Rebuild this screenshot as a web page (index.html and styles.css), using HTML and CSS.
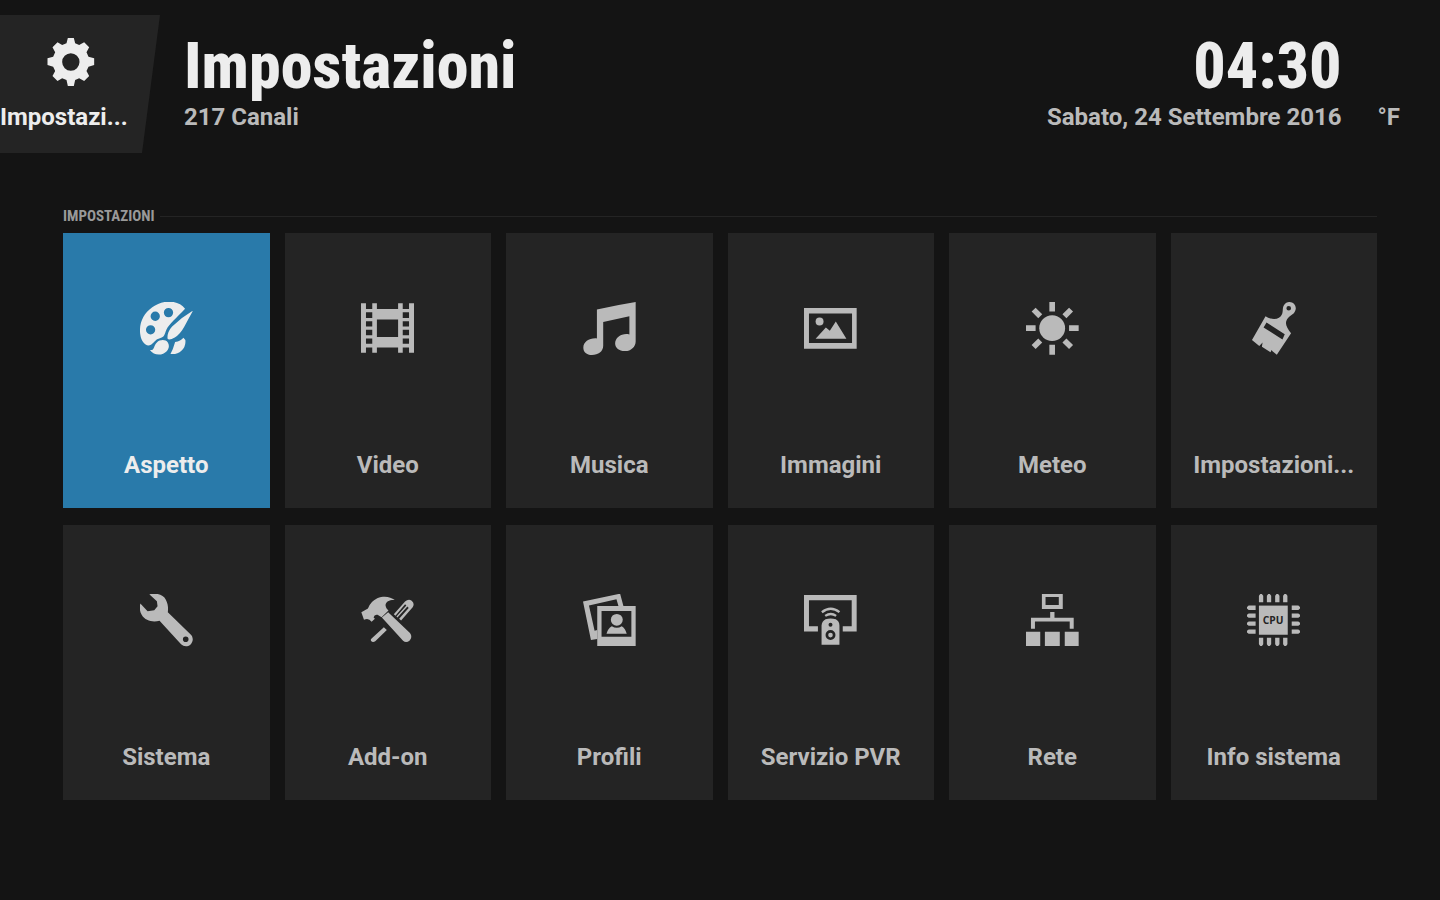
FILE: index.html
```html
<!DOCTYPE html>
<html lang="it">
<head>
    <meta charset="UTF-8">
    <meta name="viewport" content="width=device-width, initial-scale=1.0">
    <title>Impostazioni</title>
    <link rel="stylesheet" href="styles.css">
</head>
<body>
    <header class="testata">
        <a class="scheda" href="#">
            <svg class="ingranaggio" viewBox="136 114 141 144" aria-hidden="true">
                <path fill-rule="evenodd" d="M197 114h18l4 16 12 5 15-8 15 15-8 15 6 13 17 5v20l-17 5-6 13 8 15-15 15-15-8-12 5-4 18h-18l-4-18-13-5-14 8-15-15 8-15-6-13-17-5v-20l17-5 6-13-8-15 15-15 14 8 13-5zM206 160a26 26 0 1 0 0 52 26 26 0 1 0 0-52z"/>
            </svg>
            <span>Impostazi...</span>
        </a>
        <div class="titolo">
            <h1>Impostazioni</h1>
            <p>217 Canali</p>
        </div>
        <div class="orologio">
            <time class="ora">04:30</time>
            <p>Sabato, 24 Settembre 2016</p>
        </div>
        <p class="gradi">°F</p>
    </header>

    <main class="contenuto">
        <h2 class="sezione">IMPOSTAZIONI</h2>
        <nav class="griglia">
            <a class="voce attiva" href="#">
                <svg viewBox="42 36 160 160" aria-hidden="true">
                    <path fill-rule="evenodd" d="M178 56C158 29 110 28 79 52 50 72 38 105 43 135c3 22 18 38 32 30 10-6 13-16 25-19 18-4 16-14 22-27 7-16 29-34 56-63zM128 54a14 14 0 1 1 0 28 14 14 0 1 1 0-28zM88 65a14 14 0 1 1 0 28 14 14 0 1 1 0-28zM74 106a14 14 0 1 1 0 28 14 14 0 1 1 0-28z"/>
                    <path d="M200 63q-34 20-61 47-15 16-14 36 4 8 22-3 16-9 29-33 14-26 25-46zM72 181c15 2 10-13 21-23 9-9 26-10 33 0 8 13 0 28-14 34-14 6-31 2-40-11zM173 144q-8 10-25 13-6 22-14 36 21 2 33-10 14-13 12-32z"/>
                </svg>
                <span>Aspetto</span>
            </a>
            <a class="voce" href="#">
                <svg viewBox="42 36 160 160" aria-hidden="true">
                    <path fill-rule="evenodd" d="M42 40h15v17h19V40h14v17h64V40h14v17h19V40h15v149h-15v-16h-19v16h-14v-16H90v16H76v-16H57v16H42zM90 89v53h64V89zM57 67v17h19V67zM57 94v16h19V94zM57 120v16h19v-16zM57 146v16h19v-16zM168 67v17h19V67zM168 94v16h19V94zM168 120v16h19v-16zM168 146v16h19v-16z"/>
                </svg>
                <span>Video</span>
            </a>
            <a class="voce" href="#">
                <svg viewBox="42 36 160 160" aria-hidden="true">
                    <path d="M84 59q60-14 117-23v119c0 17-16 30-33 29-17 0-29-10-29-23 0-18 21-32 43-27V79l-79 17v72c0 17-15 28-34 28-16 0-26-9-26-22 0-18 19-30 41-28z"/>
                </svg>
                <span>Musica</span>
            </a>
            <a class="voce" href="#">
                <svg viewBox="42 36 160 160" aria-hidden="true">
                    <path fill-rule="evenodd" d="M42 54h159v123H42zM57 71v89h130V71z"/>
                    <circle cx="89" cy="95" r="12"/>
                    <path d="M77 147l31-34 12 10 18-28 32 52z"/>
                </svg>
                <span>Immagini</span>
            </a>
            <a class="voce" href="#">
                <svg viewBox="42 36 160 160" aria-hidden="true">
                    <circle cx="121" cy="115" r="39"/>
                    <path class="raggi" d="M121 36v29M121 165v30M42 115h29M172 115h29M65 59l20 20M158 152l20 20M178 59l-20 20M85 152l-20 20"/>
                </svg>
                <span>Meteo</span>
            </a>
            <a class="voce" href="#">
                <svg viewBox="42 36 160 160" aria-hidden="true">
                    <path fill-rule="evenodd" d="M98 79c22 14 43 10 50-7 4-12-1-20 9-31 13-12 35-1 32 17-3 17-17 16-26 30-8 13-1 26 12 42l-43 65-13-10-3-4-3 7-26-17 2-13-10 11-22-18zM168 48a7 7 0 1 0 0 14 7 7 0 1 0 0-14zM101 98l-9 15 57 36 7-16z"/>
                </svg>
                <span>Impostazioni...</span>
            </a>
            <a class="voce" href="#">
                <svg viewBox="42 36 160 160" aria-hidden="true">
                    <path fill-rule="evenodd" d="M70 37c18-5 42-1 50 16 8 15 7 28 6 38l69 67c9 9 8 23-1 31-9 7-20 6-28-1l-65-71c-20 5-43 1-54-18-7-12-6-24-4-34l22 23 20-3 10-12-2-15zM180 164a8 8 0 1 0 0 17 8 8 0 1 0 0-17z"/>
                </svg>
                <span>Sistema</span>
            </a>
            <a class="voce" href="#">
                <svg viewBox="42 36 160 160" aria-hidden="true">
                    <path d="M43 91l20-11q7-21 28-31c22-9 40-4 53 5-15-1-27 4-28 16 1 8 5 12 9 16l-21 20-12-7q-10-2-12 8l4 4-10 9q-9-13-23-6zM105 107l19-16 65 62c7 8 6 17 0 23-7 6-14 6-20 1zM111 136l9 9-35 34q-8 5-13-2-2-4 2-7z"/>
                    <path d="M141 97l34-38q10-10 20-3 10 8 3 20l-35 40-6-5 29-33-4-4-30 33-3-3 30-33-4-4-29 35z"/>
                </svg>
                <span>Add-on</span>
            </a>
            <a class="voce" href="#">
                <svg viewBox="42 36 160 160" aria-hidden="true">
                    <path d="M42 59l112-24 10 37h-15l-6-20-83 19 17 76 8-2v27l-19 3z"/>
                    <path fill-rule="evenodd" d="M85 72h116v121H85zM98 87v78h90V87z"/>
                    <circle cx="144" cy="114" r="18"/>
                    <path d="M113 156q4-17 16-23 15 10 30 0 11 7 15 23z"/>
                </svg>
                <span>Profili</span>
            </a>
            <a class="voce" href="#">
                <svg viewBox="42 36 160 160" aria-hidden="true">
                    <path d="M42 39h159v110h-42v-16h27V55H57v78h27v16H42z"/>
                    <path fill-rule="evenodd" d="M95 189v-58q1-13 12-19 15-4 31 0 11 6 11 19v58zM122 123a6 6 0 1 0 0 12 6 6 0 1 0 0-12zM122 145a15 15 0 1 0 0 30 15 15 0 1 0 0-30zM122 153a7 7 0 1 1 0 14 7 7 0 1 1 0-14z"/>
                    <path class="onde" d="M96 91q27-21 53 0M106 102q17-11 33 0"/>
                </svg>
                <span>Servizio PVR</span>
            </a>
            <a class="voce" href="#">
                <svg viewBox="42 36 160 160" aria-hidden="true">
                    <path fill-rule="evenodd" d="M90 34h63v47H90zM101 45v24h40V45z"/>
                    <path d="M115 90h13v18h58v33h-12v-22H69v22H57v-33h58zM42 150h43v43H42zM99 150h45v43H99zM159 150h42v43h-42z"/>
                </svg>
                <span>Rete</span>
            </a>
            <a class="voce" href="#">
                <svg viewBox="42 36 160 160" aria-hidden="true">
                    <path d="M78 71h87v88H78z"/>
                    <path d="M78 61V41l4-5h5l4 5v20zM102 61V41l4-5h5l4 5v20zM127 61V41l4-5h5l4 5v20zM151 61V41l4-5h5l4 5v20zM78 168h13v20l-4 5h-5l-4-5zM102 168h13v20l-4 5h-5l-4-5zM127 168h13v20l-4 5h-5l-4-5zM151 168h13v20l-4 5h-5l-4-5z"/>
                    <path d="M68 71H47l-5 4v5l5 4h21zM68 95H47l-5 4v5l5 4h21zM68 119H47l-5 4v5l5 4h21zM68 143H47l-5 4v5l5 4h21zM177 71h20l5 4v5l-5 4h-20zM177 95h20l5 4v5l-5 4h-20zM177 119h20l5 4v5l-5 4h-20zM177 143h20l5 4v5l-5 4h-20z"/>
                    <text class="cpu" x="121" y="126">CPU</text>
                </svg>
                <span>Info sistema</span>
            </a>
        </nav>
    </main>
</body>
</html>
```
FILE: styles.css
```css
* {
    box-sizing: border-box;
}

body {
    margin: 0;
    min-height: 100vh;
    background-color: #141414;
    color: #bababa;
    font-family: Roboto, sans-serif;
    font-size: 24px;
    font-weight: 700;
    line-height: 30px;
}

h1, h2, p {
    margin: 0;
}

a {
    color: inherit;
    text-decoration: none;
}

svg {
    fill: currentColor;
}

.testata {
    display: flex;
    align-items: flex-start;
    padding: 15px 40px 0 0;
}

.scheda {
    display: flex;
    flex-direction: column;
    width: 160px;
    height: 138px;
    padding-top: 23px;
    gap: 16px;
    background-color: #242424;
    color: #ededed;
    clip-path: polygon(0 0, 100% 0, 142px 100%, 0 100%);
}

.ingranaggio {
    width: 48px;
    height: 48px;
    margin-left: 47px;
}

.titolo {
    margin-left: 24px;
    padding-top: 17px;
}

.titolo h1, .ora {
    display: block;
    color: #ededed;
    font-family: "Roboto Condensed", Roboto, sans-serif;
    font-size: 64px;
    font-weight: 800;
    line-height: 70px;
}

.orologio {
    margin-left: auto;
    padding-top: 17px;
    text-align: right;
}

.gradi {
    margin-left: 36px;
    padding-top: 87px;
}

.contenuto {
    padding: 55px 63px 100px;
}

.sezione {
    display: flex;
    align-items: center;
    gap: 5px;
    margin-bottom: 9px;
    color: #999;
    font-family: "Roboto Condensed", Roboto, sans-serif;
    font-size: 15px;
    font-weight: 700;
    line-height: 16px;
}

.sezione::after {
    content: "";
    flex: 1;
    height: 1px;
    background-color: #242424;
}

.griglia {
    display: grid;
    grid-template-columns: repeat(6, 1fr);
    gap: 17px 15px;
}

.voce {
    display: flex;
    flex-direction: column;
    align-items: center;
    justify-content: space-between;
    height: 275px;
    padding: 69px 0 28px;
    background-color: #242424;
    white-space: nowrap;
}

.voce svg {
    width: 53px;
    height: 53px;
}

.attiva {
    background-color: #297aaa;
    color: #ededed;
}

.raggi, .onde {
    fill: none;
    stroke: currentColor;
    stroke-width: 17;
}

.onde {
    stroke-width: 7;
}

.cpu {
    fill: #242424;
    font-family: "Open Sans", sans-serif;
    font-size: 31px;
    font-weight: 700;
    text-anchor: middle;
}
```
